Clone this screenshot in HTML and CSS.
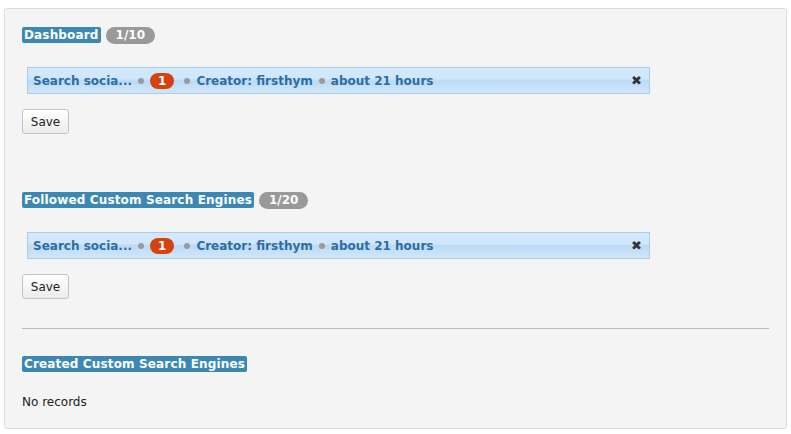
FILE: index.html
```html
<!DOCTYPE html>
<html>
<head>
<meta charset="utf-8">
<link rel="stylesheet" href="styles.css">
</head>
<body>
<div class="panel">
  <section class="group">
    <h3 class="heading"><span class="label">Dashboard</span><span class="count">1/10</span></h3>
    <ul class="list">
      <li class="item">
        <span class="link">Search socia...</span>
        <span class="dot"></span>
        <span class="badge">1</span>
        <span class="dot"></span>
        <span class="link">Creator: firsthym</span>
        <span class="dot"></span>
        <span class="link">about 21 hours</span>
        <span class="close">&#10006;</span>
      </li>
    </ul>
    <button class="btn">Save</button>
  </section>
  <section class="group second">
    <h3 class="heading"><span class="label">Followed Custom Search Engines</span><span class="count">1/20</span></h3>
    <ul class="list">
      <li class="item">
        <span class="link">Search socia...</span>
        <span class="dot"></span>
        <span class="badge">1</span>
        <span class="dot"></span>
        <span class="link">Creator: firsthym</span>
        <span class="dot"></span>
        <span class="link">about 21 hours</span>
        <span class="close">&#10006;</span>
      </li>
    </ul>
    <button class="btn">Save</button>
  </section>
  <hr class="rule">
  <section class="group third">
    <h3 class="heading"><span class="label">Created Custom Search Engines</span></h3>
    <p class="empty">No records</p>
  </section>
</div>
</body>
</html>
```
FILE: styles.css
```css
html, body { background: #fff; }
body {
  margin: 8px 4px 0;
  font-family: "DejaVu Sans", Verdana, sans-serif;
}
.panel {
  background: #f4f4f4;
  border: 1px solid #dcdcdc;
  border-radius: 3px;
  height: 421px;
  box-sizing: border-box;
  padding: 18px 17px 0;
}
.heading {
  margin: 0;
  display: flex;
  align-items: center;
  gap: 5px;
  height: 16px;
}
.label {
  background: #3b88b5;
  color: #fff;
  font-size: 12px;
  font-weight: bold;
  line-height: 16px;
  padding: 0 2px;
  letter-spacing: 0.15px;
  border-radius: 2px;
}
.count {
  background: #999;
  color: #fff;
  font-size: 12px;
  font-weight: bold;
  line-height: 17px;
  padding: 0 10px;
  border-radius: 9px;
}
.list {
  list-style: none;
  margin: 24px 0 0 5px;
  padding: 0;
  width: 623px;
}
.item {
  height: 27px;
  box-sizing: border-box;
  border: 1px solid #a9cde6;
  background: linear-gradient(#d4eafc 0%, #cfe6fb 42%, #bcdaf4 52%, #d0e7fb 100%);
  display: flex;
  align-items: center;
  padding: 0 5px;
  gap: 6px;
}
.link {
  color: #2d6da3;
  font-size: 12px;
  font-weight: bold;
  white-space: nowrap;
}
.dot {
  width: 6px;
  height: 6px;
  border-radius: 50%;
  background: #9a9a9a;
}
.badge {
  background: #d5420e;
  color: #fff;
  font-size: 12px;
  font-weight: bold;
  line-height: 16px;
  padding: 0 8px;
  border-radius: 8px;
  margin-right: 4px;
}
.close {
  margin-left: auto;
  color: #333;
  font-size: 13px;
  margin-right: 2px;
}
.btn {
  display: block;
  margin-top: 15px;
  width: 47px;
  height: 25px;
  font-family: "DejaVu Sans", Tahoma, sans-serif;
  font-size: 12px;
  color: #222;
  background: linear-gradient(#ffffff, #ececec);
  border: 1px solid #c4c4c4;
  border-radius: 3px;
  padding: 0;
}
.second { margin-top: 58px; }
.rule {
  border: 0;
  border-top: 1px solid #bcbcbc;
  margin: 29px 0 0;
}
.third { margin-top: 27px; }
.empty {
  margin: 23px 0 0;
  font-size: 12px;
  color: #222;
}
```
